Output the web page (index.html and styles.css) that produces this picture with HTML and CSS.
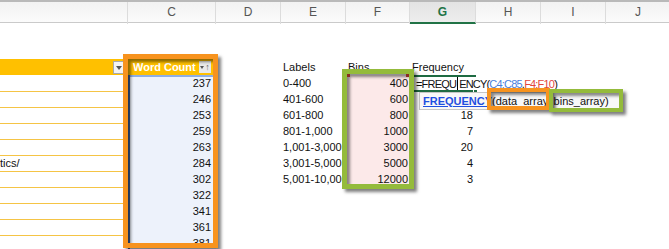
FILE: index.html
```html
<!DOCTYPE html>
<html lang="en">
<head>
    <meta charset="UTF-8">
    <title>Word Count Frequency</title>
    <link rel="stylesheet" href="styles.css">
</head>
<body>
<div class="sheet">
    <div class="colbar">
        <div class="col"></div>
        <div class="col">C</div>
        <div class="col">D</div>
        <div class="col">E</div>
        <div class="col">F</div>
        <div class="col active">G</div>
        <div class="col">H</div>
        <div class="col">I</div>
        <div class="col">J</div>
    </div>
    <div class="gap"></div>

    <div class="row">
        <div class="cell tbl-head"><span class="dd"></span></div>
        <div class="cell wc-head"><span>Word Count</span><span class="sort"><i class="tri"></i>&#8593;</span></div>
        <div class="cell"></div>
        <div class="cell">Labels</div>
        <div class="cell">Bins</div>
        <div class="cell">Frequency</div>
        <div class="cell"></div>
        <div class="cell"></div>
        <div class="cell"></div>
    </div>
    <div class="row">
        <div class="cell tbl"></div>
        <div class="cell wc first">237</div>
        <div class="cell"></div>
        <div class="cell">0-400</div>
        <div class="cell bin">400</div>
        <div class="cell formula">=FREQU<span class="caret"></span>ENCY(<span class="ref-c">C4:C85</span>,<span class="ref-f">F4:F10</span>)<span class="handle"></span></div>
        <div class="cell"></div>
        <div class="cell"></div>
        <div class="cell"></div>
    </div>
    <div class="row">
        <div class="cell tbl"></div>
        <div class="cell wc">246</div>
        <div class="cell"></div>
        <div class="cell">401-600</div>
        <div class="cell bin">600</div>
        <div class="cell"></div>
        <div class="cell"></div>
        <div class="cell"></div>
        <div class="cell"></div>
    </div>
    <div class="row">
        <div class="cell tbl"></div>
        <div class="cell wc">253</div>
        <div class="cell"></div>
        <div class="cell">601-800</div>
        <div class="cell bin">800</div>
        <div class="cell freq">18</div>
        <div class="cell"></div>
        <div class="cell"></div>
        <div class="cell"></div>
    </div>
    <div class="row">
        <div class="cell tbl"></div>
        <div class="cell wc">259</div>
        <div class="cell"></div>
        <div class="cell">801-1,000</div>
        <div class="cell bin">1000</div>
        <div class="cell freq">7</div>
        <div class="cell"></div>
        <div class="cell"></div>
        <div class="cell"></div>
    </div>
    <div class="row">
        <div class="cell tbl"></div>
        <div class="cell wc">263</div>
        <div class="cell"></div>
        <div class="cell">1,001-3,000</div>
        <div class="cell bin">3000</div>
        <div class="cell freq">20</div>
        <div class="cell"></div>
        <div class="cell"></div>
        <div class="cell"></div>
    </div>
    <div class="row">
        <div class="cell tbl">tics/</div>
        <div class="cell wc">284</div>
        <div class="cell"></div>
        <div class="cell">3,001-5,000</div>
        <div class="cell bin">5000</div>
        <div class="cell freq">4</div>
        <div class="cell"></div>
        <div class="cell"></div>
        <div class="cell"></div>
    </div>
    <div class="row">
        <div class="cell tbl"></div>
        <div class="cell wc">302</div>
        <div class="cell"></div>
        <div class="cell">5,001-10,000</div>
        <div class="cell bin">12000</div>
        <div class="cell freq">3</div>
        <div class="cell"></div>
        <div class="cell"></div>
        <div class="cell"></div>
    </div>
    <div class="row">
        <div class="cell tbl"></div>
        <div class="cell wc">322</div>
    </div>
    <div class="row">
        <div class="cell tbl"></div>
        <div class="cell wc">341</div>
    </div>
    <div class="row">
        <div class="cell tbl"></div>
        <div class="cell wc">361</div>
    </div>
    <div class="row">
        <div class="cell tbl"></div>
        <div class="cell wc">381</div>
    </div>

    <!-- formula tooltip -->
    <div class="tip"><span class="fn">FREQUENCY</span>(data_array, bins_array)</div>

    <!-- annotation boxes -->
    <div class="mark orange box-c"></div>
    <div class="mark green box-f"><i class="corner tl"></i><i class="corner tr"></i></div>
    <div class="mark orange box-a"></div>
    <div class="mark green box-b"></div>
</div>
</body>
</html>
```

FILE: styles.css
```css
* {
    box-sizing: border-box;
}

body {
    margin: 0;
    background-color: #fff;
    font-family: "Liberation Sans", Arial, sans-serif;
    font-size: 11px;
    color: #111;
    overflow: hidden;
}

.sheet {
    position: relative;
    width: 669px;
    height: 249px;
    overflow: hidden;
}

/* column letters */
.colbar {
    display: grid;
    grid-template-columns: 128px 88px 65px 65px 64px 66px 65px 65px 65px;
    height: 23px;
    border-top: 2px solid #b9b9b9;
    border-bottom: 1px solid #cacaca;
    background: linear-gradient(#f2f2f2, #fbfbfb);
}

.col {
    border-right: 1px solid #dcdcdc;
    text-align: center;
    line-height: 20px;
    font-size: 12px;
    color: #555;
}

.col.active {
    background: linear-gradient(#e3e3e3, #ededed);
    border-bottom: 2px solid #217346;
    color: #217346;
    font-weight: bold;
}

.gap {
    height: 36px;
}

/* rows */
.row {
    display: grid;
    grid-template-columns: 128px 88px 65px 65px 64px 66px 65px 65px 65px;
    height: 16px;
    line-height: 16px;
}

.cell {
    padding: 0 3px 0 2px;
    white-space: nowrap;
}

.tbl {
    border-bottom: 1px solid #f5c445;
    padding-left: 0;
}

.tbl-head {
    display: flex;
    align-items: center;
    justify-content: flex-end;
    padding-right: 4px;
    background-color: #ffc000;
}

.dd {
    position: relative;
    width: 11px;
    height: 13px;
    background-color: #f4f4f4;
    border: 1px solid #a9a9a9;
}

.dd::after {
    content: "";
    position: absolute;
    left: 2px;
    top: 4px;
    border-left: 3px solid transparent;
    border-right: 3px solid transparent;
    border-top: 4px solid #555;
}

.wc-head {
    display: flex;
    align-items: center;
    justify-content: space-between;
    padding: 0 5px 0 5px;
    background-color: #ffc000;
    color: #fff;
    font-weight: bold;
}

.sort {
    display: flex;
    align-items: center;
    justify-content: center;
    gap: 1px;
    width: 12px;
    height: 12px;
    background-color: #e9e9e9;
    color: #666;
    font-size: 9px;
    font-weight: normal;
}

.tri {
    border-left: 2px solid transparent;
    border-right: 2px solid transparent;
    border-top: 3px solid #555;
}

.wc {
    text-align: right;
    padding-right: 5px;
    background-color: #edf2fb;
    border-bottom: 1px solid #f3d27f;
    border-left: 2px solid #3f5f9c;
}

.wc.first {
    box-shadow: inset 0 2px 0 #8eaee2;
}

.bin {
    text-align: right;
    padding-right: 2px;
    background-color: #fce9e9;
}

.freq {
    text-align: right;
    padding-right: 3px;
}

/* cell being edited */
.formula {
    position: relative;
    z-index: 1;
    padding-left: 4px;
    letter-spacing: -0.8px;
    border-top: 2px solid #1e6b42;
    border-bottom: 2px solid #1e6b42;
    border-left: 2px solid #1e6b42;
    line-height: 12px;
}

.caret {
    display: inline-block;
    width: 1px;
    height: 13px;
    margin: 0 1px;
    vertical-align: -2px;
    background-color: #000;
}

.ref-c {
    color: #4a7fdb;
}

.ref-f {
    color: #e2463c;
}

.handle {
    position: absolute;
    right: -2px;
    bottom: -4px;
    width: 5px;
    height: 5px;
    background-color: #1e6b42;
    border: 1px solid #fff;
}

/* function tooltip */
.tip {
    position: absolute;
    left: 419px;
    top: 92px;
    width: 202px;
    height: 18px;
    padding-left: 3px;
    line-height: 17px;
    background-color: #f8f8f8;
    border: 1px solid #c6c6c6;
    white-space: nowrap;
    z-index: 2;
}

.fn {
    color: #1f4fe0;
    font-weight: bold;
    text-decoration: underline;
}

/* highlight boxes drawn over the sheet */
.mark {
    position: absolute;
    z-index: 3;
    box-shadow: 3px 3px 3px rgba(0, 0, 0, 0.5), inset 3px 3px 3px rgba(0, 0, 0, 0.45);
}

.orange {
    border: 5px solid #f7931e;
}

.green {
    border: 5px solid #94bb3b;
}

.box-c {
    left: 123px;
    top: 54px;
    width: 95px;
    height: 194px;
}

.box-f {
    left: 342px;
    top: 69px;
    width: 72px;
    height: 120px;
}

.box-a {
    left: 487px;
    top: 88px;
    width: 63px;
    height: 22px;
    border-width: 4px;
}

.box-b {
    left: 549px;
    top: 89px;
    width: 74px;
    height: 23px;
    border-width: 4px;
}

.corner {
    position: absolute;
    top: 0;
    width: 3px;
    height: 3px;
    background-color: #8b2b22;
}

.corner.tl {
    left: 0;
}

.corner.tr {
    right: 0;
}
```
